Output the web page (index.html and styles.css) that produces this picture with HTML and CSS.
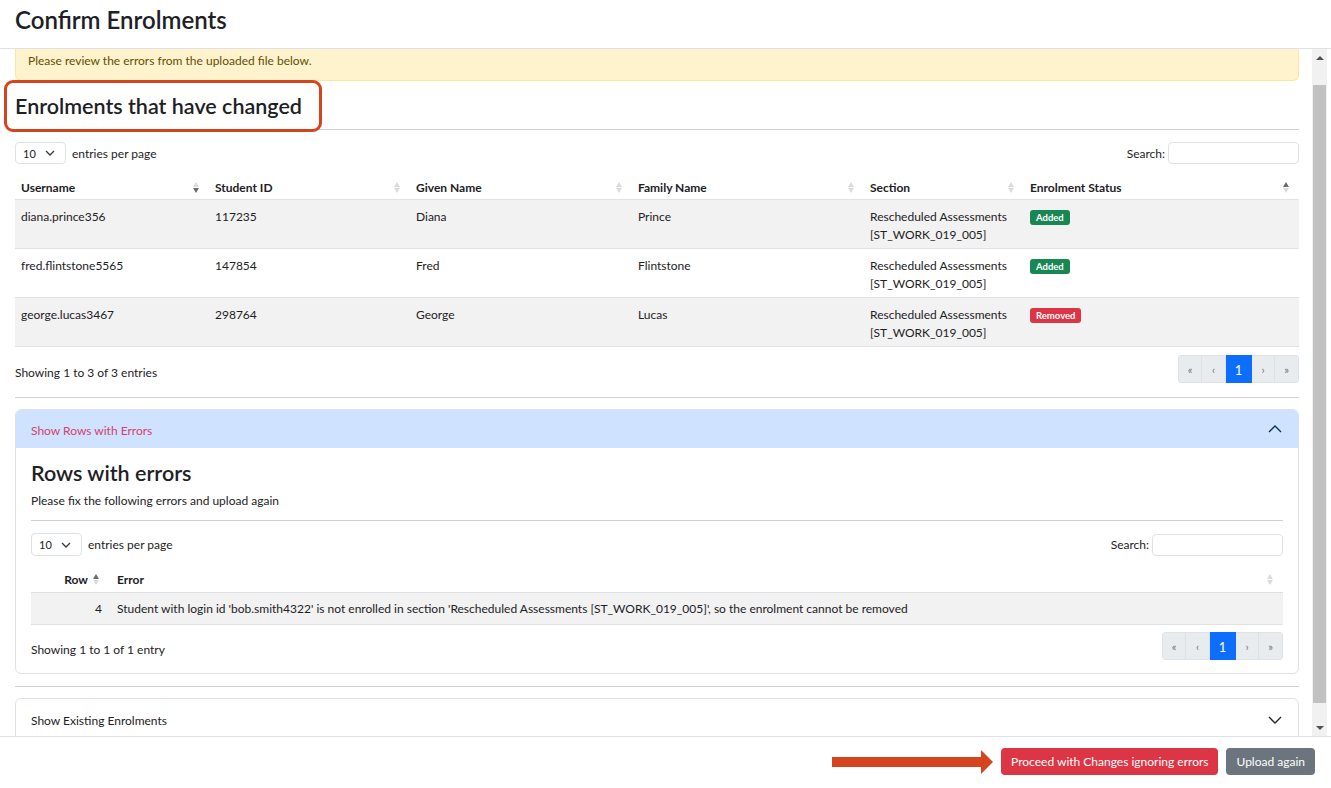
FILE: index.html
```html
<!DOCTYPE html>
<html lang="en">
<head>
  <meta charset="UTF-8">
  <meta name="viewport" content="width=device-width, initial-scale=1.0">
  <title>Confirm Enrolments</title>
  <link rel="stylesheet" href="styles.css">
</head>
<body>
  <div class="modal">
    <div class="modal-header">
      <h2 class="modal-title">Confirm Enrolments</h2>
    </div>

    <div class="modal-main">
      <div class="modal-body">
        <div class="alert">Please review the errors from the uploaded file below.</div>

        <div class="section-title">
          <h3>Enrolments that have changed</h3>
          <span class="highlight"></span>
        </div>
        <hr class="rule rule-top">

        <div class="dt-top">
          <div class="dt-length">
            <div class="select">10
              <svg width="10" height="6" viewBox="0 0 10 6"><path d="M1 1l4 4 4-4" fill="none" stroke="#343a40" stroke-width="1.3"/></svg>
            </div>
            <span>entries per page</span>
          </div>
          <div class="dt-search">
            <span>Search:</span>
            <span class="input"></span>
          </div>
        </div>

        <table class="dt dt-changes">
          <colgroup>
            <col style="width:194px"><col style="width:201px"><col style="width:222px">
            <col style="width:232px"><col style="width:160px"><col>
          </colgroup>
          <thead>
            <tr>
              <th><div class="th">Username<span class="sort desc"><i></i><i></i></span></div></th>
              <th><div class="th">Student ID<span class="sort"><i></i><i></i></span></div></th>
              <th><div class="th">Given Name<span class="sort"><i></i><i></i></span></div></th>
              <th><div class="th">Family Name<span class="sort"><i></i><i></i></span></div></th>
              <th><div class="th">Section<span class="sort"><i></i><i></i></span></div></th>
              <th><div class="th">Enrolment Status<span class="sort asc"><i></i><i></i></span></div></th>
            </tr>
          </thead>
          <tbody>
            <tr class="odd">
              <td>diana.prince356</td><td>117235</td><td>Diana</td><td>Prince</td>
              <td>Rescheduled Assessments<br>[ST_WORK_019_005]</td>
              <td><span class="badge added">Added</span></td>
            </tr>
            <tr>
              <td>fred.flintstone5565</td><td>147854</td><td>Fred</td><td>Flintstone</td>
              <td>Rescheduled Assessments<br>[ST_WORK_019_005]</td>
              <td><span class="badge added">Added</span></td>
            </tr>
            <tr class="odd">
              <td>george.lucas3467</td><td>298764</td><td>George</td><td>Lucas</td>
              <td>Rescheduled Assessments<br>[ST_WORK_019_005]</td>
              <td><span class="badge removed">Removed</span></td>
            </tr>
          </tbody>
        </table>

        <div class="dt-bottom">
          <span class="info">Showing 1 to 3 of 3 entries</span>
          <ul class="pager">
            <li class="off">&laquo;</li><li class="off">&lsaquo;</li><li class="on">1</li><li class="off">&rsaquo;</li><li class="off">&raquo;</li>
          </ul>
        </div>

        <hr class="rule rule-mid">

        <div class="card">
          <div class="card-head open">
            <span>Show Rows with Errors</span>
            <svg width="14" height="8" viewBox="0 0 14 8"><path d="M1 7l6-6 6 6" fill="none" stroke="#052c65" stroke-width="1.3"/></svg>
          </div>
          <div class="card-body">
            <h3 class="errors-title">Rows with errors</h3>
            <p class="errors-note">Please fix the following errors and upload again</p>
            <hr class="rule rule-inner">

            <div class="dt-top dt-top-inner">
              <div class="dt-length">
                <div class="select">10
                  <svg width="10" height="6" viewBox="0 0 10 6"><path d="M1 1l4 4 4-4" fill="none" stroke="#343a40" stroke-width="1.3"/></svg>
                </div>
                <span>entries per page</span>
              </div>
              <div class="dt-search">
                <span>Search:</span>
                <span class="input"></span>
              </div>
            </div>

            <table class="dt dt-errors">
              <colgroup><col style="width:80px"><col></colgroup>
              <thead>
                <tr>
                  <th><div class="th th-right">Row<span class="sort asc"><i></i><i></i></span></div></th>
                  <th><div class="th">Error<span class="sort"><i></i><i></i></span></div></th>
                </tr>
              </thead>
              <tbody>
                <tr class="odd">
                  <td class="num">4</td>
                  <td>Student with login id 'bob.smith4322' is not enrolled in section 'Rescheduled Assessments [ST_WORK_019_005]', so the enrolment cannot be removed</td>
                </tr>
              </tbody>
            </table>

            <div class="dt-bottom dt-bottom-inner">
              <span class="info">Showing 1 to 1 of 1 entry</span>
              <ul class="pager">
                <li class="off">&laquo;</li><li class="off">&lsaquo;</li><li class="on">1</li><li class="off">&rsaquo;</li><li class="off">&raquo;</li>
              </ul>
            </div>
          </div>
        </div>

        <hr class="rule rule-low">

        <div class="card">
          <div class="card-head closed">
            <span>Show Existing Enrolments</span>
            <svg width="14" height="8" viewBox="0 0 14 8"><path d="M1 1l6 6 6-6" fill="none" stroke="#1d2125" stroke-width="1.3"/></svg>
          </div>
        </div>
      </div>

      <div class="scrollbar">
        <div class="sb-btn"><span class="tri up"></span></div>
        <div class="sb-space top"></div>
        <div class="sb-thumb"></div>
        <div class="sb-space"></div>
        <div class="sb-btn"><span class="tri down"></span></div>
      </div>
    </div>

    <div class="modal-footer">
      <svg class="pointer" width="162" height="24" viewBox="0 0 162 24">
        <rect x="0" y="7" width="150" height="10" fill="#d5441c"/>
        <polygon points="149,0 161,12 149,24" fill="#d5441c"/>
      </svg>
      <button class="btn btn-danger">Proceed with Changes ignoring errors</button>
      <button class="btn btn-secondary">Upload again</button>
    </div>
  </div>
</body>
</html>
```

FILE: styles.css
```css
body {
  margin: 0;
  font-family: Lato, "Segoe UI", "Open Sans", sans-serif;
  font-size: 12px;
  color: #1d2125;
  background: #fff;
}

.modal {
  height: 788px;
  display: flex;
  flex-direction: column;
  overflow: hidden;
}

.modal-header {
  height: 48px;
  padding: 0 15px;
  border-bottom: 1px solid #dee2e6;
}

.modal-title {
  margin: 0;
  font-size: 24px;
  font-weight: 600;
  line-height: 40px;
}

.modal-main {
  flex: 1;
  display: flex;
  min-height: 0;
}

.modal-body {
  flex: 1;
  padding: 0 13px 0 15px;
  overflow: hidden;
}

/* alert, scrolled partly out of view */
.alert {
  background: #fff3cd;
  color: #664d03;
  border: 1px solid #ffe69c;
  border-top: 0;
  border-radius: 0 0 6px 6px;
  padding: 3px 12px 10px;
  line-height: 18px;
}

.section-title {
  position: relative;
  margin-top: 13px;
}

.section-title h3 {
  margin: 0;
  font-size: 21.5px;
  font-weight: 600;
  line-height: 24px;
}

.highlight {
  position: absolute;
  left: -11px;
  top: -14px;
  width: 318px;
  height: 52px;
  box-sizing: border-box;
  border: 3px solid #d5441c;
  border-radius: 9px;
}

.rule {
  border: 0;
  border-top: 1px solid #cfd1d3;
  margin: 0;
}

.rule-top { margin-top: 11px; }
.rule-mid { margin-top: 14px; }
.rule-inner { margin-top: 10px; }
.rule-low { margin-top: 12px; }

.dt-top {
  display: flex;
  justify-content: space-between;
  align-items: center;
  margin-top: 12px;
  height: 22px;
}

.dt-top-inner { height: 23px; margin-top: 12px; }

.dt-length, .dt-search {
  display: flex;
  align-items: center;
  gap: 6px;
}

.select {
  width: 51px;
  height: 100%;
  box-sizing: border-box;
  border: 1px solid #dee2e6;
  border-radius: 4px;
  display: flex;
  align-items: center;
  justify-content: space-between;
  padding: 0 10px 0 7px;
  font-size: 11px;
}

.dt-length { height: 100%; }

.input {
  display: block;
  width: 131px;
  height: 22px;
  box-sizing: border-box;
  border: 1px solid #dee2e6;
  border-radius: 4px;
}

.dt-search { gap: 3px; }

.dt {
  width: 100%;
  border-collapse: collapse;
  table-layout: fixed;
  margin-top: 12px;
}

.dt th {
  text-align: left;
  font-weight: 700;
  padding: 0 6px;
  height: 23px;
  border-bottom: 1px solid #dee2e6;
}

.th {
  display: flex;
  justify-content: space-between;
  align-items: center;
}

.sort {
  display: flex;
  flex-direction: column;
  gap: 1px;
  margin-right: 4px;
}

.sort i {
  display: block;
  width: 0;
  height: 0;
  border-left: 3.5px solid transparent;
  border-right: 3.5px solid transparent;
}

.sort i:first-child { border-bottom: 5px solid #dcdcdc; }
.sort i:last-child { border-top: 5px solid #dcdcdc; }
.sort.asc i:first-child { border-bottom-color: #6c6c6c; }
.sort.desc i:last-child { border-top-color: #6c6c6c; }

.dt td {
  padding: 8px 6px 4px;
  line-height: 18px;
  vertical-align: top;
  border-bottom: 1px solid #dee2e6;
}

.dt tr.odd td {
  background: #f2f2f2;
}

.badge {
  display: inline-block;
  margin-top: 2px;
  padding: 2px 6px;
  border-radius: 3px;
  color: #fff;
  font-size: 9.5px;
  font-weight: 700;
  line-height: 11px;
  vertical-align: top;
}

.badge.added { background: #198754; }
.badge.removed { background: #dc3545; }

.dt-bottom {
  display: flex;
  justify-content: space-between;
  align-items: flex-end;
  margin-top: 8px;
}

.info {
  line-height: 18px;
  margin-bottom: 1px;
}

.pager {
  display: flex;
  list-style: none;
  margin: 0;
  padding: 0;
  border-radius: 4px;
  overflow: hidden;
}

.pager li {
  width: 24px;
  height: 28px;
  line-height: 27px;
  text-align: center;
  border: 1px solid #dee2e6;
  border-left: 0;
  box-sizing: border-box;
  font-size: 11px;
  color: #6c757d;
  background: #e9ecef;
}

.pager li:first-child { border-left: 1px solid #dee2e6; }
.pager li:nth-child(4) { width: 23px; }

.pager li.on {
  width: 26px;
  background: #0d6efd;
  border-color: #0d6efd;
  color: #fff;
  font-size: 13px;
  line-height: 28px;
}

.card {
  border: 1px solid #dee2e6;
  border-radius: 6px;
  margin-top: 11px;
  overflow: hidden;
}

.card-head {
  display: flex;
  justify-content: space-between;
  align-items: center;
  padding: 0 16px 0 15px;
}

.card-head.open {
  height: 38px;
  background: #cfe2ff;
  color: #d63f6c;
}

.card-head.open span { padding-top: 2px; }

.card-head.closed {
  height: 42px;
}

.card-body {
  padding: 0 15px 13px;
}

.errors-title {
  margin: 13px 0 0;
  font-size: 21.5px;
  font-weight: 600;
  line-height: 24px;
}

.errors-note {
  margin: 7px 0 0;
  line-height: 18px;
}

.dt-errors { margin-top: 10px; }
.dt-errors th { height: 26px; }
.dt-errors td { padding: 7px 6px 6px; }
.dt-errors td.num { text-align: right; padding-right: 9px; }

.th-right { justify-content: flex-end; gap: 5px; }
.th-right .sort { margin-right: 6px; }

.dt-bottom-inner { margin-top: 7px; }

/* fake scrollbar of the modal body */
.scrollbar {
  width: 15px;
  margin-right: 4px;
  background: #f1f1f1;
  display: flex;
  flex-direction: column;
}

.sb-btn {
  height: 17px;
  display: flex;
  align-items: center;
  justify-content: center;
}

.sb-space { flex: 1; }
.sb-space.top { flex: 0 0 19px; }

.sb-thumb {
  height: 618px;
  margin: 0 1px;
  background: #c1c1c1;
}

.tri {
  width: 0;
  height: 0;
  border-left: 4px solid transparent;
  border-right: 4px solid transparent;
}

.tri.up { border-bottom: 4px solid #505050; }
.tri.down { border-top: 4px solid #505050; }

.modal-footer {
  height: 52px;
  border-top: 1px solid #dee2e6;
  display: flex;
  align-items: flex-start;
  justify-content: flex-end;
  gap: 8px;
  padding: 11px 16px 0 0;
  box-sizing: border-box;
}

.pointer {
  margin-top: 2px;
  margin-right: -1px;
}

.btn {
  height: 27px;
  padding: 0 10px;
  border: 0;
  border-radius: 4px;
  color: #fff;
  font-family: inherit;
  font-size: 12px;
  cursor: pointer;
}

.btn-danger { background: #dc3545; }
.btn-secondary { background: #6c757d; }
```
